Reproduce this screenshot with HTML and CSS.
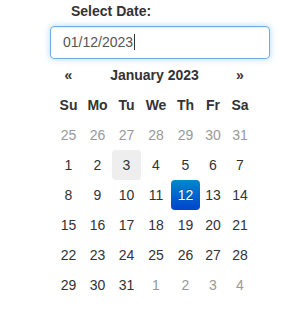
FILE: index.html
```html
<!DOCTYPE html>
<html lang="en">
<head>
	<meta charset="UTF-8">
	<title>Select Date</title>
	<link rel="stylesheet" href="styles.css">
</head>
<body>
	<div class="picker-wrap">
		<label class="picker-label">Select Date:</label>
		<div class="date-input">01/12/2023<span class="caret"></span></div>
		<table class="datepicker">
			<thead>
				<tr class="nav-row">
					<th class="prev">&laquo;</th>
					<th colspan="5" class="switch">January 2023</th>
					<th class="next">&raquo;</th>
				</tr>
				<tr class="dow-row">
					<th>Su</th><th>Mo</th><th>Tu</th><th>We</th><th>Th</th><th>Fr</th><th>Sa</th>
				</tr>
			</thead>
			<tbody>
				<tr><td class="old">25</td><td class="old">26</td><td class="old">27</td><td class="old">28</td><td class="old">29</td><td class="old">30</td><td class="old">31</td></tr>
				<tr><td>1</td><td>2</td><td class="today">3</td><td>4</td><td>5</td><td>6</td><td>7</td></tr>
				<tr><td>8</td><td>9</td><td>10</td><td>11</td><td class="active">12</td><td>13</td><td>14</td></tr>
				<tr><td>15</td><td>16</td><td>17</td><td>18</td><td>19</td><td>20</td><td>21</td></tr>
				<tr><td>22</td><td>23</td><td>24</td><td>25</td><td>26</td><td>27</td><td>28</td></tr>
				<tr><td>29</td><td>30</td><td>31</td><td class="new">1</td><td class="new">2</td><td class="new">3</td><td class="new">4</td></tr>
			</tbody>
		</table>
	</div>
</body>
</html>
```

FILE: styles.css
```css
* {
	margin: 0;
	padding: 0;
	box-sizing: border-box;
}
body {
	background-color: #fff;
	font-family: "Liberation Sans", Arial, sans-serif;
	font-size: 14px;
	color: #333;
}

.picker-wrap {
	padding: 3px 0 0 50px;
}

.picker-label {
	display: block;
	margin-left: 21px;
	font-weight: bold;
	line-height: 17px;
	height: 23px;
}

.date-input {
	width: 220px;
	height: 33px;
	padding: 0 12px;
	line-height: 31px;
	color: #555;
	border: 1px solid #66afe9;
	border-radius: 4px;
	box-shadow: inset 0 1px 1px rgba(0,0,0,.075), 0 0 6px rgba(102,175,233,.5);
}
.date-input .caret {
	display: inline-block;
	width: 1px;
	height: 16px;
	margin-left: 1px;
	vertical-align: -3px;
	background-color: #333;
}

.datepicker {
	margin: 1px 0 0 4px;
	border-collapse: collapse;
}
.datepicker th,
.datepicker td {
	height: 30px;
	padding: 0;
	text-align: center;
	border-radius: 4px;
}
.datepicker th {
	font-weight: bold;
}
.datepicker .dow-row th:nth-child(1),
.datepicker .dow-row th:nth-child(2),
.datepicker .dow-row th:nth-child(3),
.datepicker .dow-row th:nth-child(5) {
	width: 29px;
}
.datepicker .dow-row th:nth-child(4) {
	width: 30px;
}
.datepicker .dow-row th:nth-child(6) {
	width: 26px;
}
.datepicker .dow-row th:nth-child(7) {
	width: 28px;
}

.datepicker td.old,
.datepicker td.new {
	color: #999;
}
.datepicker td.today {
	background-color: #eee;
	background-clip: content-box;
}
.datepicker td.active {
	color: #fff;
	text-shadow: 0 -1px 0 rgba(0,0,0,.25);
	background-color: #0060cc;
	background-image: linear-gradient(to bottom, #0088cc, #0044cc);
}
```
